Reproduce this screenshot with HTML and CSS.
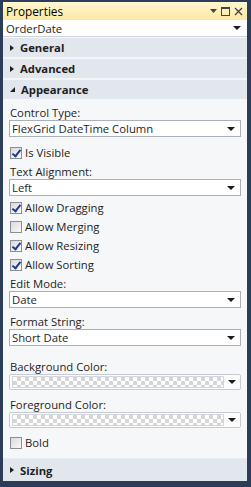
FILE: index.html
```html
<!DOCTYPE html>
<html lang="en">
<head>
  <meta charset="UTF-8">
  <title>Properties</title>
  <link rel="stylesheet" href="styles.css">
</head>
<body>
  <div class="window">
    <div class="titlebar">
      <span class="title">Properties</span>
      <span class="title-buttons">
        <svg width="7" height="4" viewBox="0 0 7 4"><path d="M0 0h7L3.5 4z" fill="#444"/></svg>
        <svg width="9" height="9" viewBox="0 0 9 9"><rect x="0.5" y="0.5" width="8" height="8" fill="none" stroke="#444"/><rect x="0" y="0" width="9" height="2" fill="#444"/></svg>
        <svg width="9" height="9" viewBox="0 0 9 9"><path d="M1 1l7 7M8 1L1 8" stroke="#444" stroke-width="1.3"/></svg>
      </span>
    </div>
    <div class="object-select">
      <span>OrderDate</span>
      <span class="arrow"></span>
    </div>

    <div class="section-header"><span class="tri closed"></span>General</div>
    <div class="section-header"><span class="tri closed"></span>Advanced</div>
    <div class="section-header"><span class="tri open"></span>Appearance</div>

    <div class="section-body">
      <div class="field">
        <label class="field-label">Control Type:</label>
        <div class="combo"><span>FlexGrid DateTime Column</span><span class="arrow"></span></div>
      </div>
      <div class="check visible-check"><span class="box checked"></span>Is Visible</div>
      <div class="field align-field">
        <label class="field-label">Text Alignment:</label>
        <div class="combo"><span>Left</span><span class="arrow"></span></div>
      </div>
      <div class="check-group">
        <div class="check"><span class="box checked"></span>Allow Dragging</div>
        <div class="check"><span class="box"></span>Allow Merging</div>
        <div class="check"><span class="box checked"></span>Allow Resizing</div>
        <div class="check"><span class="box checked"></span>Allow Sorting</div>
      </div>
      <div class="field edit-field">
        <label class="field-label">Edit Mode:</label>
        <div class="combo"><span>Date</span><span class="arrow"></span></div>
      </div>
      <div class="field format-field">
        <label class="field-label">Format String:</label>
        <div class="combo"><span>Short Date</span><span class="arrow"></span></div>
      </div>
      <div class="field back-field">
        <label class="field-label">Background Color:</label>
        <div class="color-combo"><span class="swatch"></span><span class="arrow"></span></div>
      </div>
      <div class="field fore-field">
        <label class="field-label">Foreground Color:</label>
        <div class="color-combo"><span class="swatch"></span><span class="arrow"></span></div>
      </div>
      <div class="check bold-check"><span class="box"></span>Bold</div>
    </div>

    <div class="section-header sizing"><span class="tri closed"></span>Sizing</div>
  </div>
</body>
</html>
```

FILE: styles.css
```css
html, body {
  margin: 0;
  padding: 0;
  background: #2c3d5a;
}

body {
  font-family: 'Open Sans', 'Noto Sans', sans-serif;
  font-size: 11.3px;
  color: #1e1e1e;
}

.window {
  width: 251px;
  height: 487px;
  box-sizing: border-box;
  padding: 2px 4px 6px 3px;
  background: #2c3d5a;
  display: flex;
  flex-direction: column;
}

.window > * {
  flex-shrink: 0;
  box-sizing: border-box;
}

.titlebar {
  height: 18px;
  display: flex;
  align-items: center;
  justify-content: space-between;
  padding: 0 4px 0 3px;
  background: linear-gradient(#fff7d2, #fde8a2);
  font-size: 11.8px;
  color: #000;
}

.title-buttons {
  display: flex;
  align-items: center;
  gap: 4px;
}

.object-select {
  height: 17px;
  background: #fff;
  display: flex;
  align-items: center;
  justify-content: space-between;
  padding: 0 6px 0 3px;
  border-bottom: 1px solid #cfd4dc;
}

.arrow {
  width: 0;
  height: 0;
  border-left: 4px solid transparent;
  border-right: 4px solid transparent;
  border-top: 4px solid #1b1b1b;
}

.section-header {
  height: 20px;
  display: flex;
  align-items: center;
  padding-left: 7px;
  background: #e2e6ed;
  border-top: 1px solid #f7f8fa;
  font-weight: bold;
  color: #1e1e1e;
  gap: 6px;
}

.section-header + .section-header {
  border-top: 2px solid #f4f5f7;
  height: 21px;
}

.tri.closed {
  width: 0;
  height: 0;
  border-top: 3.5px solid transparent;
  border-bottom: 3.5px solid transparent;
  border-left: 4px solid #1e1e1e;
}

.tri.open {
  width: 0;
  height: 0;
  border-left: 5px solid transparent;
  border-bottom: 5px solid #1e1e1e;
}

.section-body {
  flex: 1 0 auto;
  background: #f6f7f8;
  padding: 6px 6px 0 6px;
  display: flex;
  flex-direction: column;
}

.field {
  display: flex;
  flex-direction: column;
}

.field-label {
  line-height: 15px;
  padding-left: 1px;
}

.combo {
  height: 17px;
  box-sizing: border-box;
  background: #fff;
  border: 1px solid #aab0ba;
  display: flex;
  align-items: center;
  justify-content: space-between;
  padding: 0 5px 0 2px;
}

.visible-check {
  margin-top: 6px;
}

.align-field {
  margin-top: 2px;
}

.check-group {
  display: flex;
  flex-direction: column;
  margin-top: 2px;
}

.edit-field {
  margin-top: 2px;
}

.format-field {
  margin-top: 6px;
}

.back-field {
  margin-top: 13px;
}

.fore-field {
  margin-top: 7px;
}

.bold-check {
  margin-top: 5px;
}

.color-combo {
  height: 16px;
  box-sizing: border-box;
  border: 1px solid #c5cad3;
  border-radius: 2px;
  background: #fcfcfd;
  display: flex;
  align-items: center;
  gap: 4px;
  padding: 0 4px 0 2px;
}

.swatch {
  flex: 1;
  height: 10px;
  border: 1px solid #d3d7dd;
  background-color: #fff;
  background-image:
    linear-gradient(45deg, #d6d6d6 25%, transparent 25%, transparent 75%, #d6d6d6 75%),
    linear-gradient(45deg, #d6d6d6 25%, transparent 25%, transparent 75%, #d6d6d6 75%);
  background-size: 8px 8px;
  background-position: 0 0, 4px 4px;
}

.check {
  display: flex;
  align-items: center;
  gap: 3px;
  height: 19px;
  padding-left: 1px;
}

.box {
  width: 10px;
  height: 10px;
  border: 1px solid #8e8f8f;
  background: linear-gradient(135deg, #d8d8d8, #fbfbfb);
  position: relative;
  flex-shrink: 0;
}

.box.checked::after {
  content: '';
  position: absolute;
  left: 3px;
  top: 0;
  width: 3px;
  height: 7px;
  border-right: 2px solid #1f3a93;
  border-bottom: 2px solid #1f3a93;
  transform: rotate(38deg);
}

.section-header.sizing {
  height: 23px;
  border-top: 1px solid #e8ebf0;
}
```
